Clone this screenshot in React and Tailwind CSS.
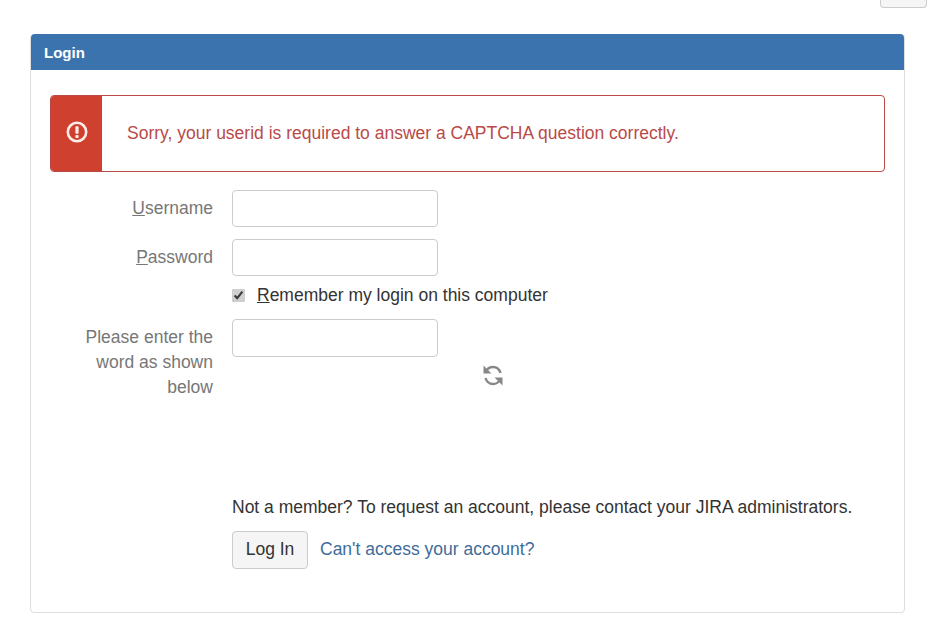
import React from "react";

function Row({ label, children, className = "" }) {
  return (
    <div className={`flex ${className}`}>
      <div className="w-[163px] ml-[20px] pt-[6px] text-right text-[17.5px] leading-[25px] text-[#777]">{label}</div>
      <div className="ml-[19px]">{children}</div>
    </div>
  );
}

function TextInput({ className = "h-[37px]" }) {
  return <input type="text" className={`block w-[206px] bg-white border border-[#ccc] rounded-[4px] ${className}`} />;
}

function RefreshIcon() {
  return (
    <svg width="20" height="21" viewBox="0 0 20 21" fill="none">
      <path d="M0.5 0.5V8.5H8.5Z" fill="#888" />
      <path d="M3.5 5.5C5 3 7.5 2 10 2C13.5 2 16.5 4.5 17.5 8" stroke="#888" strokeWidth="2.4" />
      <path d="M19.5 20.5V12.5H11.5Z" fill="#888" />
      <path d="M16.5 15.5C15 18 12.5 19 10 19C6.5 19 3.5 16.5 2.5 13" stroke="#888" strokeWidth="2.4" />
    </svg>
  );
}

export default function App() {
  return (
    <div className="w-[932px] h-[630px] overflow-hidden bg-white font-['Liberation_Sans',Arial,sans-serif] text-[#333]">
      <div className="flex justify-end pr-[5px]">
        <div className="w-[47px] h-[8px] bg-[#f5f5f5] border border-t-0 border-[#ccc] rounded-b-[4px]"></div>
      </div>
      <div className="ml-[30px] mt-[26px] w-[875px] h-[579px] border border-[#ddd] rounded-[4px]">
        <div className="-mt-px h-[36px] flex items-center pl-[13px] pt-[3px] bg-[#3b73af] rounded-t-[4px] text-white text-[15px] font-bold">
          Login
        </div>
        <div className="pt-[25px] px-[19px]">
          <div className="flex h-[77px] border border-[#b94a48] rounded-[4px] overflow-hidden">
            <div className="w-[51px] shrink-0 bg-[#d0402f] flex items-center justify-center">
              <svg className="mb-[3px]" width="22" height="22" viewBox="0 0 22 22" fill="none">
                <circle cx="11" cy="11" r="9.2" stroke="#fbeee9" strokeWidth="2.6" />
                <rect x="9.4" y="5.2" width="3.2" height="7.6" rx="1" fill="#fbeee9" />
                <rect x="9.4" y="14" width="3.2" height="3" rx="0.8" fill="#fbeee9" />
              </svg>
            </div>
            <div className="flex items-center pl-[25px] text-[17.5px] text-[#b94a48]">
              Sorry, your userid is required to answer a CAPTCHA question correctly.
            </div>
          </div>
          <div className="mt-[18px] -ml-[20px]">
            <Row label={<><u>U</u>sername</>}>
              <TextInput />
            </Row>
            <Row label={<><u>P</u>assword</>} className="mt-[12px]">
              <TextInput />
            </Row>
            <div className="flex items-center ml-[202px] mt-[7px] h-[24px] text-[17.5px]">
              <input type="checkbox" defaultChecked className="w-[13px] h-[13px] m-0 accent-[#d0d0d0]" />
              <span className="ml-[12px]"><u>R</u>emember my login on this computer</span>
            </div>
            <Row label="Please enter the word as shown below" className="mt-[12px]">
              <TextInput className="h-[38px]" />
              <div className="h-[29px] mt-[8px] ml-[251px]">
                <RefreshIcon />
              </div>
            </Row>
            <div className="ml-[202px] mt-[95px]">
              <div className="text-[17.5px] leading-[25px]">Not a member? To request an account, please contact your JIRA administrators.</div>
              <div className="flex items-center mt-[11px]">
                <button className="w-[76px] h-[38px] pb-[2px] bg-[#f5f5f5] border border-[#ccc] rounded-[4px] text-[17.5px]">Log In</button>
                <a className="ml-[12px] mb-[2px] text-[17.5px] text-[#3f6c99]">Can't access your account?</a>
              </div>
            </div>
          </div>
        </div>
      </div>
    </div>
  );
}
